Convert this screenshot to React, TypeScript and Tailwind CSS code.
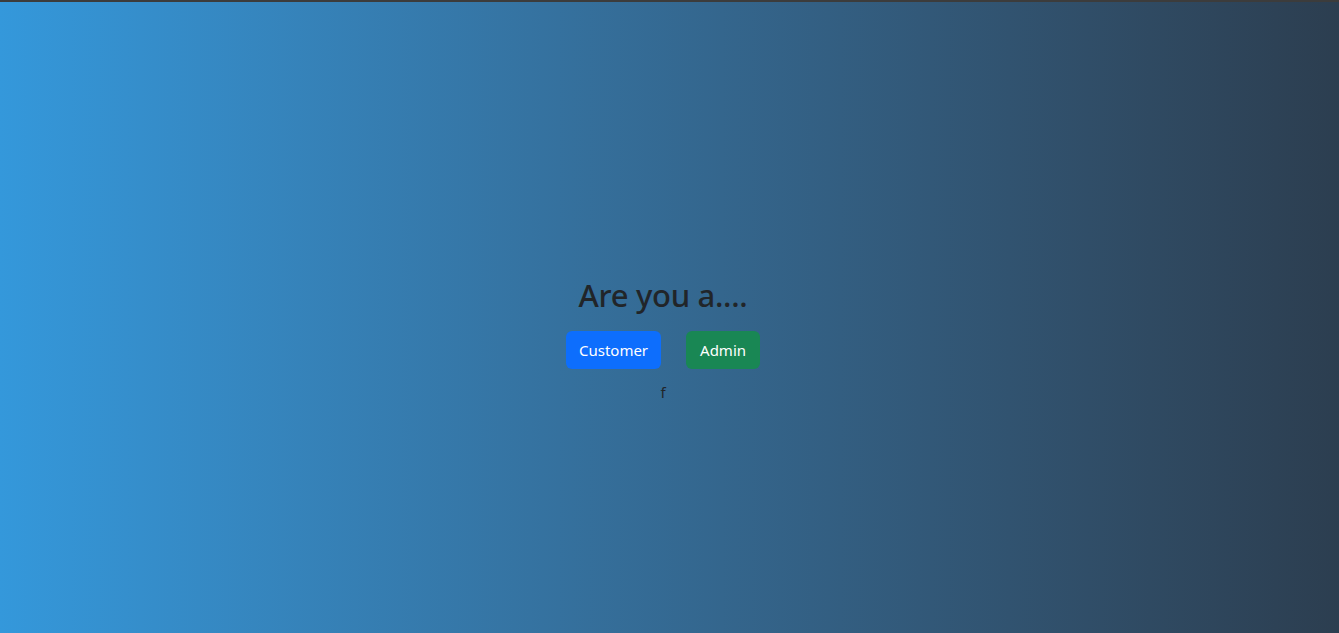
export default function App() {
  return (
    <div
      className="min-h-screen w-full border-t-2 border-[#3c3c3c] bg-gradient-to-r from-[#3498db] to-[#2c3e50] text-[#212529]"
      style={{ fontFamily: '"Noto Sans", "Open Sans", sans-serif' }}
    >
      <div className="flex h-[631px] flex-col items-center justify-center pr-[13px] pt-[45px]">
        <h2 className="text-[31px] font-medium leading-[38px] tracking-[-0.3px]">
          Are you a....
        </h2>

        <div className="mt-[17px] flex gap-[25px]">
          <button className="h-[38px] rounded-md bg-[#0d6efd] px-[13px] text-[15px] text-white">
            Customer
          </button>

          <button className="h-[38px] rounded-md bg-[#198754] px-[14px] text-[15px] text-white">
            Admin
          </button>
        </div>

        <p className="mt-[11px] text-[15px] leading-6">f</p>
      </div>
    </div>
  );
}
